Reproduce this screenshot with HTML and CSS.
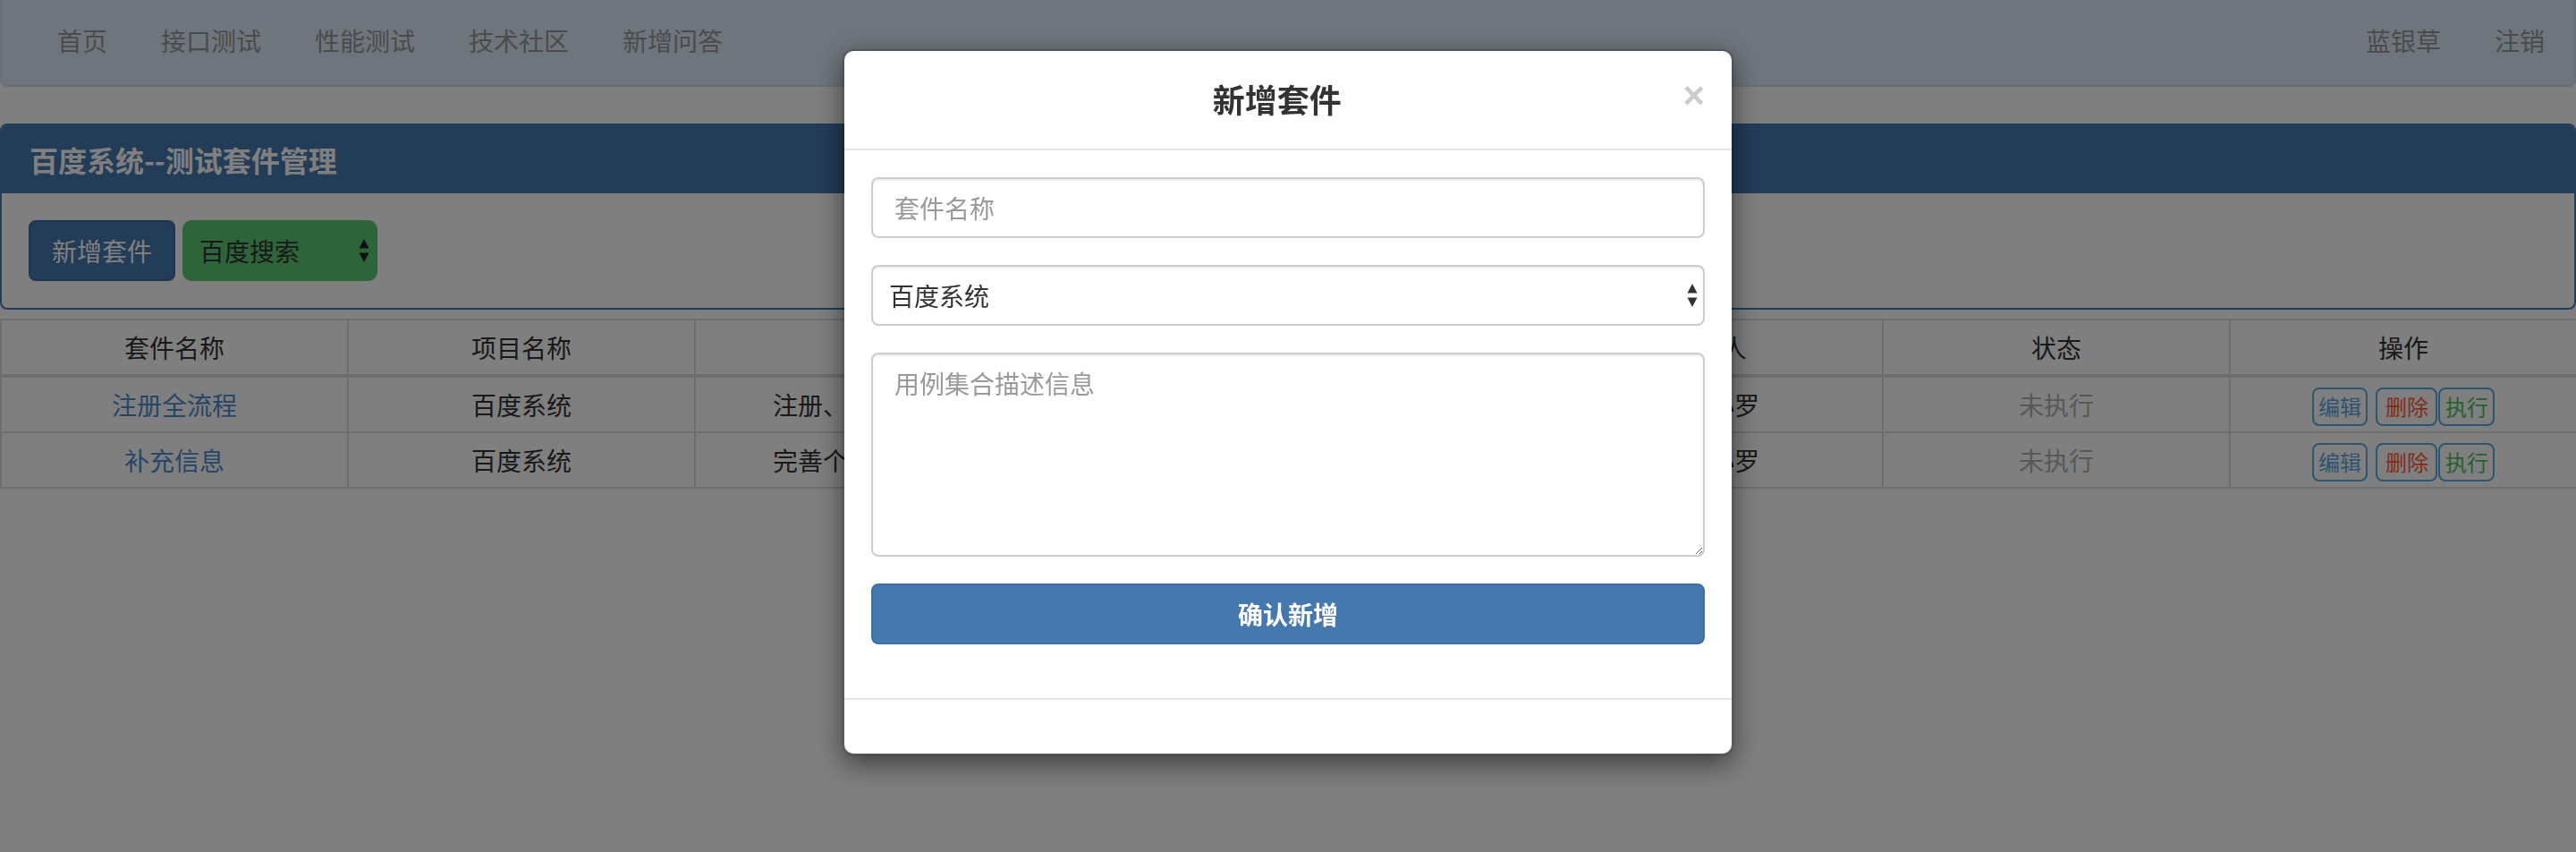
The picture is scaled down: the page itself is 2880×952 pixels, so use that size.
FILE: index.html
```html
<!DOCTYPE html>
<html lang="zh-CN">
<head>
<meta charset="utf-8">
<title>测试套件管理</title>
<link rel="stylesheet" href="styles.css">
</head>
<body>
<nav class="navbar">
  <ul class="nav">
    <li><a href="#">首页</a></li>
    <li><a href="#">接口测试</a></li>
    <li><a href="#">性能测试</a></li>
    <li><a href="#">技术社区</a></li>
    <li><a href="#">新增问答</a></li>
  </ul>
  <ul class="nav">
    <li><a href="#">蓝银草</a></li>
    <li><a href="#">注销</a></li>
  </ul>
</nav>

<main class="content">
  <section class="panel">
    <div class="panel-heading">
      <h3 class="panel-title">百度系统--测试套件管理</h3>
    </div>
    <div class="panel-body">
      <button class="btn btn-primary" type="button">新增套件</button>
      <div class="select-wrap select-success">
        <select class="select-plain">
          <option>百度搜索</option>
        </select>
        <svg class="select-arrows" width="12" height="28" viewBox="0 0 12 28"><path d="M6 1 L11.5 11.5 L0.5 11.5 Z M6 27 L11.5 16.5 L0.5 16.5 Z" fill="#222"/></svg>
      </div>
    </div>
  </section>

  <table class="table">
    <colgroup>
      <col class="c-std"><col class="c-std"><col class="c-wide"><col class="c-std"><col class="c-std"><col class="c-std">
    </colgroup>
    <thead>
      <tr><th>套件名称</th><th>项目名称</th><th>描述</th><th>创建人</th><th>状态</th><th>操作</th></tr>
    </thead>
    <tbody>
      <tr>
        <td class="first"><a href="#">注册全流程</a></td>
        <td>百度系统</td>
        <td class="desc">注册、登录、激活全流程测试</td>
        <td>测试小罗</td>
        <td class="status">未执行</td>
        <td><span class="ops"><a class="op op-edit" href="#">编辑</a><a class="op op-del" href="#">删除</a><a class="op op-run" href="#">执行</a></span></td>
      </tr>
      <tr>
        <td class="first"><a href="#">补充信息</a></td>
        <td>百度系统</td>
        <td class="desc">完善个人信息测试</td>
        <td>测试小罗</td>
        <td class="status">未执行</td>
        <td><span class="ops"><a class="op op-edit" href="#">编辑</a><a class="op op-del" href="#">删除</a><a class="op op-run" href="#">执行</a></span></td>
      </tr>
    </tbody>
  </table>
</main>

<div class="backdrop"></div>

<div class="modal">
  <div class="modal-dialog">
    <div class="modal-header">
      <h4 class="modal-title">新增套件</h4>
      <button class="close" type="button">×</button>
    </div>
    <div class="modal-body">
      <div class="form-group">
        <input class="form-control" type="text" placeholder="套件名称">
      </div>
      <div class="form-group select-wrap">
        <select class="form-control form-select">
          <option>百度系统</option>
        </select>
        <svg class="select-arrows modal-arrows" width="12" height="28" viewBox="0 0 12 28"><path d="M6 1 L11.5 11.5 L0.5 11.5 Z M6 27 L11.5 16.5 L0.5 16.5 Z" fill="#333"/></svg>
      </div>
      <div class="form-group">
        <textarea class="form-control form-textarea" rows="5" placeholder="用例集合描述信息"></textarea>
      </div>
      <div class="form-group">
        <button class="btn-block" type="button">确认新增</button>
      </div>
    </div>
    <div class="modal-footer"></div>
  </div>
</div>
</body>
</html>
```

FILE: styles.css
```css
* { box-sizing: border-box; }

html, body {
  margin: 0;
  padding: 0;
  background: #fff;
  font-family: "Noto Sans CJK SC", "Noto Sans", sans-serif;
  font-size: 28px;
  line-height: 40px;
  color: #333;
}

a { text-decoration: none; }

/* navbar */
.navbar {
  height: 97px;
  display: flex;
  justify-content: space-between;
  padding: 0 3px 0 32px;
  background: #dceafa;
  border: 2px solid #d2dfee;
  border-top: 0;
  border-radius: 0 0 8px 8px;
}
.nav {
  display: flex;
  list-style: none;
  margin: 0;
  padding: 0;
}
.nav a {
  display: block;
  padding: 25px 30px 30px;
  line-height: 40px;
  color: #969696;
}

/* content */
.content {
  padding-top: 41px;
}

.panel {
  border: 2px solid #4678b0;
  border-radius: 8px;
  margin-bottom: 10px;
  overflow: hidden;
}
.panel-heading {
  background: #4678b0;
  padding: 20px 31px;
}
.panel-title {
  margin: 0;
  font-size: 32px;
  line-height: 36px;
  font-weight: 700;
  color: #fff;
}
.panel-body {
  padding: 30px;
  display: flex;
  gap: 8px;
}

.btn {
  height: 68px;
  padding: 0 24px;
  font-family: inherit;
  font-size: 28px;
  line-height: 40px;
  border-radius: 8px;
  cursor: pointer;
}
.btn-primary {
  background: #4678b0;
  border: 2px solid #3b6aa0;
  color: #fff;
}

.select-wrap {
  position: relative;
}
.select-success {
  width: 218px;
  height: 68px;
  background: #5cc874;
  border-radius: 10px;
}
.select-plain {
  appearance: none;
  -webkit-appearance: none;
  width: 100%;
  height: 100%;
  border: 0;
  background: transparent;
  padding: 0 19px;
  font-family: inherit;
  font-size: 28px;
  color: #333;
}
.select-arrows {
  position: absolute;
  right: 9px;
  top: 20px;
}

/* table */
.table {
  width: 100%;
  border-collapse: collapse;
  table-layout: fixed;
  border: 2px solid #dcdcdc;
}
.c-std { width: 388px; }
.c-wide { width: 940px; }
.table th,
.table td {
  height: 60px;
  border: 2px solid #dcdcdc;
  padding: 10px;
  line-height: 40px;
  text-align: center;
  font-weight: 400;
  color: #333;
  white-space: nowrap;
  vertical-align: top;
}
.table thead th {
  border-bottom-width: 4px;
}
.table td a { color: #4f8cce; }
.table td.desc { text-align: left; padding-left: 86px; overflow: hidden; }
.table td.status { color: #b0b0b0; }

.ops {
  display: inline-flex;
  align-items: flex-start;
  height: 40px;
  vertical-align: top;
}
.op {
  display: block;
  height: 43px;
  margin-top: 1px;
  border: 2px solid #5aa8e0;
  border-radius: 8px;
  font-size: 24px;
  line-height: 38px;
}
.table td .op-edit { color: #5aa8e0; padding: 0 5px; }
.table td .op-del { color: #ff5a3a; padding: 0 8px 0 9px; margin-left: 9px; }
.table td .op-run { color: #4cc45e; padding: 0 5px 0 6px; margin-left: 1px; }

/* modal */
.backdrop {
  position: fixed;
  inset: 0;
  background: rgba(0, 0, 0, 0.5);
}
.modal {
  position: fixed;
  inset: 0;
  display: flex;
  justify-content: center;
  align-items: flex-start;
}
.modal-dialog {
  width: 996px;
  margin-top: 55px;
  background: #fff;
  border: 2px solid rgba(0, 0, 0, 0.2);
  border-radius: 12px;
  box-shadow: 0 10px 30px rgba(0, 0, 0, 0.5);
  background-clip: padding-box;
}
.modal-header {
  display: flex;
  align-items: flex-start;
  padding: 28px 30px 30px;
  border-bottom: 2px solid #e5e5e5;
}
.modal-title {
  flex: 1;
  margin: 0;
  text-align: center;
  font-size: 36px;
  line-height: 51px;
  font-weight: 700;
  color: #333;
}
.close {
  background: none;
  border: 0;
  padding: 0;
  margin-top: 1px;
  font-family: "Liberation Sans", Arial, sans-serif;
  font-size: 42px;
  font-weight: 700;
  line-height: 42px;
  color: #000;
  opacity: 0.2;
  cursor: pointer;
}

.modal-body {
  padding: 30px;
}
.form-group {
  margin-bottom: 30px;
}
.form-control {
  display: block;
  width: 100%;
  height: 68px;
  padding: 0 24px;
  font-family: inherit;
  font-size: 28px;
  line-height: 40px;
  color: #555;
  background: #fff;
  border: 2px solid #ccc;
  border-radius: 8px;
  box-shadow: inset 0 2px 2px rgba(0, 0, 0, 0.075);
}
.form-control::placeholder { color: #999; }
.form-select {
  appearance: none;
  -webkit-appearance: none;
  padding: 0 18px;
  color: #333;
}
.modal-arrows {
  right: 8px;
  top: 20px;
}
.form-textarea {
  height: 228px;
  padding: 12px 24px;
  resize: vertical;
}
.btn-block {
  display: block;
  width: 100%;
  height: 68px;
  background: #4678b0;
  border: 2px solid #3f6ea4;
  border-radius: 8px;
  color: #fff;
  font-family: inherit;
  font-size: 28px;
  font-weight: 700;
  cursor: pointer;
}

.modal-footer {
  height: 62px;
  border-top: 2px solid #e5e5e5;
}
```
